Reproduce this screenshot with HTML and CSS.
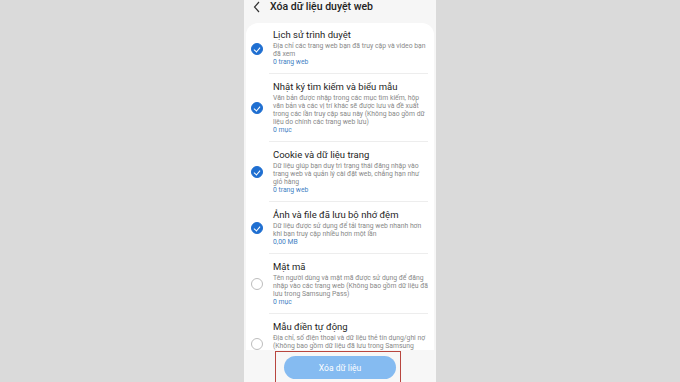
FILE: index.html
```html
<!DOCTYPE html>
<html lang="vi">
<head>
  <meta charset="UTF-8" />
  <meta name="viewport" content="width=device-width, initial-scale=1.0"/>
  <title>Xóa dữ liệu duyệt web</title>
  <link rel="stylesheet" href="styles.css">
</head>
<body>

  <div class="phone">
    <div class="header">
      <svg class="back" width="8" height="12" viewBox="0 0 8 12">
        <path d="M6 1 L1.5 6 L6 11" fill="none" stroke="#333" stroke-width="1.2"/>
      </svg>
      <div class="title">Xóa dữ liệu duyệt web</div>
    </div>

    <div class="card">
      <div class="item">
        <span class="check on"></span>
        <div class="text">
          <div class="name">Lịch sử trình duyệt</div>
          <div class="desc">Địa chỉ các trang web bạn đã truy cập và video bạn đã xem</div>
          <div class="count">0 trang web</div>
        </div>
      </div>

      <div class="item">
        <span class="check on"></span>
        <div class="text">
          <div class="name">Nhật ký tìm kiếm và biểu mẫu</div>
          <div class="desc">Văn bản được nhập trong các mục tìm kiếm, hộp văn bản và các vị trí khác sẽ được lưu và đề xuất trong các lần truy cập sau này (Không bao gồm dữ liệu do chính các trang web lưu)</div>
          <div class="count">0 mục</div>
        </div>
      </div>

      <div class="item">
        <span class="check on"></span>
        <div class="text">
          <div class="name">Cookie và dữ liệu trang</div>
          <div class="desc">Dữ liệu giúp bạn duy trì trạng thái đăng nhập vào trang web và quản lý cài đặt web, chẳng hạn như giỏ hàng</div>
          <div class="count">0 trang web</div>
        </div>
      </div>

      <div class="item">
        <span class="check on"></span>
        <div class="text">
          <div class="name">Ảnh và file đã lưu bộ nhớ đệm</div>
          <div class="desc">Dữ liệu được sử dụng để tải trang web nhanh hơn khi bạn truy cập nhiều hơn một lần</div>
          <div class="count">0,00 MB</div>
        </div>
      </div>

      <div class="item">
        <span class="check"></span>
        <div class="text">
          <div class="name">Mật mã</div>
          <div class="desc">Tên người dùng và mật mã được sử dụng để đăng nhập vào các trang web (Không bao gồm dữ liệu đã lưu trong Samsung Pass)</div>
          <div class="count">0 mục</div>
        </div>
      </div>

      <div class="item">
        <span class="check"></span>
        <div class="text">
          <div class="name">Mẫu điền tự động</div>
          <div class="desc">Địa chỉ, số điện thoại và dữ liệu thẻ tín dụng/ghi nợ (Không bao gồm dữ liệu đã lưu trong Samsung Pass)</div>
          <div class="count">0 mục</div>
        </div>
      </div>
    </div>

    <div class="footer">
      <button class="clear-btn">Xóa dữ liệu</button>
    </div>

    <div class="highlight"></div>
  </div>

</body>
</html>
```

FILE: styles.css
```css
body {
  margin: 0;
  height: 382px;
  overflow: hidden;
  background: #dadada;
  font-family: Roboto, "Noto Sans", sans-serif;
  color: #222;
  display: flex;
  justify-content: center;
}

.phone {
  position: relative;
  width: 192px;
  height: 382px;
  background: #f6f6f6;
  overflow: hidden;
}

.header {
  height: 23px;
  display: flex;
  align-items: flex-start;
  padding-left: 9px;
}

.back {
  margin-top: 1px;
}

.title {
  margin-left: 9px;
  margin-top: 1px;
  font-size: 10.5px;
  font-weight: 500;
  line-height: 12px;
  color: #222;
}

.card {
  margin: 0 2px;
  background: #fff;
  border-radius: 12px 12px 0 0;
}

.item {
  display: flex;
  align-items: center;
}

.check {
  flex: none;
  width: 12px;
  height: 12px;
  margin: 0 6px 0 5px;
  box-sizing: border-box;
  border-radius: 50%;
  border: 1px solid #bdbdbd;
  position: relative;
}

.check.on {
  background: #1f6fd1;
  border-color: #1f6fd1;
}

.check.on::after {
  content: "";
  position: absolute;
  left: 3.3px;
  top: 2px;
  width: 3px;
  height: 5px;
  border-right: 1.2px solid #fff;
  border-bottom: 1.2px solid #fff;
  transform: rotate(40deg);
}

.text {
  flex: 1;
  min-width: 0;
  padding: 7px 0 6px 4px;
  margin-right: 6px;
  border-bottom: 1px solid #ededed;
}

.item:first-child .text {
  padding-top: 6px;
}

.name {
  font-size: 9.5px;
  line-height: 12px;
  color: #1e1e1e;
}

.desc {
  margin-top: 1px;
  font-size: 6.8px;
  line-height: 8px;
  color: #888;
}

.count {
  font-size: 6.8px;
  line-height: 9px;
  color: #3f7fc4;
}

.footer {
  position: absolute;
  left: 0;
  right: 0;
  bottom: 0;
  height: 32px;
  background: #f7f7f7;
  display: flex;
  justify-content: center;
  padding-top: 6px;
  box-sizing: border-box;
}

.clear-btn {
  width: 112px;
  height: 23px;
  border: none;
  border-radius: 12px;
  background: #85bbf1;
  color: #fff;
  font-family: Roboto, "Noto Sans", sans-serif;
  font-size: 8.5px;
}

.highlight {
  position: absolute;
  left: 31px;
  top: 351px;
  width: 124px;
  height: 40px;
  border: 1.5px solid #b8463f;
}
```
